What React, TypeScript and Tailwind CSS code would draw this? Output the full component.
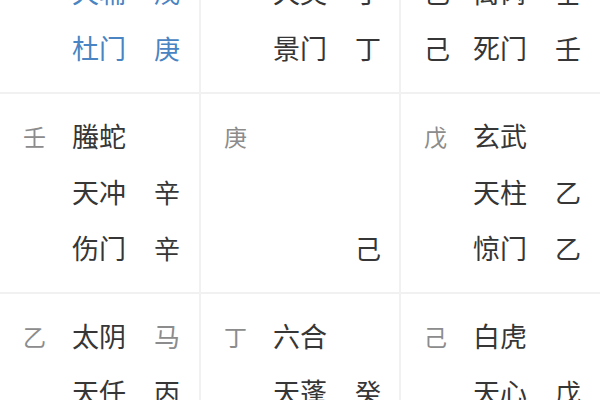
import React from "react";

type Line = { l?: string; lc?: "gray" | "dark" | "blue"; m?: string; mc?: "dark" | "blue"; r?: string; rc?: "gray" | "dark" | "blue" };

const colorCls = (c?: string) =>
  c === "gray" ? "text-[#8c8c8c]" : c === "blue" ? "text-[#4a84c2]" : "text-[#363636]";

const cells: Line[][] = [
  [
    { l: "辛", lc: "gray", m: "九天", mc: "blue" },
    { m: "天辅", mc: "blue", r: "戊", rc: "blue" },
    { m: "杜门", mc: "blue", r: "庚", rc: "blue" },
  ],
  [
    { l: "丙", lc: "gray", m: "九地" },
    { m: "天英", r: "丁" },
    { m: "景门", r: "丁" },
  ],
  [
    { l: "癸", lc: "gray", m: "值符" },
    { l: "己", lc: "dark", m: "禽芮", r: "壬" },
    { l: "己", lc: "dark", m: "死门", r: "壬" },
  ],
  [
    { l: "壬", lc: "gray", m: "螣蛇" },
    { m: "天冲", r: "辛" },
    { m: "伤门", r: "辛" },
  ],
  [{ l: "庚", lc: "gray" }, {}, { r: "己" }],
  [
    { l: "戊", lc: "gray", m: "玄武" },
    { m: "天柱", r: "乙" },
    { m: "惊门", r: "乙" },
  ],
  [
    { l: "乙", lc: "gray", m: "太阴", r: "马", rc: "gray" },
    { m: "天任", r: "丙" },
    { m: "生门", r: "丙" },
  ],
  [
    { l: "丁", lc: "gray", m: "六合" },
    { m: "天蓬", r: "癸" },
    { m: "休门", r: "癸" },
  ],
  [
    { l: "己", lc: "gray", m: "白虎" },
    { m: "天心", r: "戊" },
    { m: "开门", r: "戊" },
  ],
];

function Cell({ lines }: { lines: Line[] }) {
  return (
    <div className="bg-white h-[198px] pt-[14px] pl-[23px]">
      {lines.map((ln, i) => (
        <div key={i} className="flex items-center h-[56px] leading-[56px]">
          <div className={`w-[49px] ${ln.lc === "dark" ? "text-[26px]" : "text-[23px]"} ${colorCls(ln.lc)}`}>{ln.l ?? ""}</div>
          <div className={`w-[82px] text-[27px] ${colorCls(ln.mc)}`}>{ln.m ?? ""}</div>
          <div className={`text-[26px] ${colorCls(ln.rc)}`}>{ln.r ?? ""}</div>
        </div>
      ))}
    </div>
  );
}

export default function App() {
  return (
    <div
      className="w-[600px] h-[400px] overflow-hidden bg-white"
      style={{ fontFamily: '"Noto Sans CJK SC", "Noto Sans", sans-serif' }}
    >
      <div className="mt-[-106px] grid grid-cols-[199px_198px_199px] gap-[2px] bg-[#f1f1f1]">
        {cells.map((c, i) => (
          <Cell key={i} lines={c} />
        ))}
      </div>
    </div>
  );
}
